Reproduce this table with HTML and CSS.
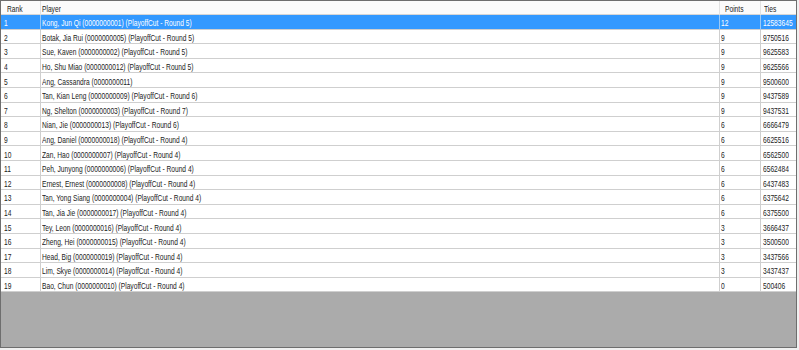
FILE: index.html
```html
<!DOCTYPE html>
<html>
<head>
<meta charset="utf-8">
<link rel="stylesheet" href="styles.css">
</head>
<body>
<div class="window">
  <div class="grid">
    <div class="row head">
      <div class="cell c-rank"><span class="t">Rank</span></div>
      <div class="cell c-player"><span class="t">Player</span></div>
      <div class="cell c-points"><span class="t">Points</span></div>
      <div class="cell c-ties"><span class="t">Ties</span></div>
    </div>
    <div class="row sel">
      <div class="cell c-rank"><span class="t">1</span></div>
      <div class="cell c-player"><span class="t">Kong, Jun Qi (0000000001) (PlayoffCut - Round 5)</span></div>
      <div class="cell c-points"><span class="t">12</span></div>
      <div class="cell c-ties"><span class="t">12583645</span></div>
    </div>
    <div class="row">
      <div class="cell c-rank"><span class="t">2</span></div>
      <div class="cell c-player"><span class="t">Botak, Jia Rui (0000000005) (PlayoffCut - Round 5)</span></div>
      <div class="cell c-points"><span class="t">9</span></div>
      <div class="cell c-ties"><span class="t">9750516</span></div>
    </div>
    <div class="row">
      <div class="cell c-rank"><span class="t">3</span></div>
      <div class="cell c-player"><span class="t">Sue, Kaven (0000000002) (PlayoffCut - Round 5)</span></div>
      <div class="cell c-points"><span class="t">9</span></div>
      <div class="cell c-ties"><span class="t">9625583</span></div>
    </div>
    <div class="row">
      <div class="cell c-rank"><span class="t">4</span></div>
      <div class="cell c-player"><span class="t">Ho, Shu Miao (0000000012) (PlayoffCut - Round 5)</span></div>
      <div class="cell c-points"><span class="t">9</span></div>
      <div class="cell c-ties"><span class="t">9625566</span></div>
    </div>
    <div class="row">
      <div class="cell c-rank"><span class="t">5</span></div>
      <div class="cell c-player"><span class="t">Ang, Cassandra (0000000011)</span></div>
      <div class="cell c-points"><span class="t">9</span></div>
      <div class="cell c-ties"><span class="t">9500600</span></div>
    </div>
    <div class="row">
      <div class="cell c-rank"><span class="t">6</span></div>
      <div class="cell c-player"><span class="t">Tan, Kian Leng (0000000009) (PlayoffCut - Round 6)</span></div>
      <div class="cell c-points"><span class="t">9</span></div>
      <div class="cell c-ties"><span class="t">9437589</span></div>
    </div>
    <div class="row">
      <div class="cell c-rank"><span class="t">7</span></div>
      <div class="cell c-player"><span class="t">Ng, Shelton (0000000003) (PlayoffCut - Round 7)</span></div>
      <div class="cell c-points"><span class="t">9</span></div>
      <div class="cell c-ties"><span class="t">9437531</span></div>
    </div>
    <div class="row">
      <div class="cell c-rank"><span class="t">8</span></div>
      <div class="cell c-player"><span class="t">Nian, Jie (0000000013) (PlayoffCut - Round 6)</span></div>
      <div class="cell c-points"><span class="t">6</span></div>
      <div class="cell c-ties"><span class="t">6666479</span></div>
    </div>
    <div class="row">
      <div class="cell c-rank"><span class="t">9</span></div>
      <div class="cell c-player"><span class="t">Ang, Daniel (0000000018) (PlayoffCut - Round 4)</span></div>
      <div class="cell c-points"><span class="t">6</span></div>
      <div class="cell c-ties"><span class="t">6625516</span></div>
    </div>
    <div class="row">
      <div class="cell c-rank"><span class="t">10</span></div>
      <div class="cell c-player"><span class="t">Zan, Hao (0000000007) (PlayoffCut - Round 4)</span></div>
      <div class="cell c-points"><span class="t">6</span></div>
      <div class="cell c-ties"><span class="t">6562500</span></div>
    </div>
    <div class="row">
      <div class="cell c-rank"><span class="t">11</span></div>
      <div class="cell c-player"><span class="t">Peh, Junyong (0000000006) (PlayoffCut - Round 4)</span></div>
      <div class="cell c-points"><span class="t">6</span></div>
      <div class="cell c-ties"><span class="t">6562484</span></div>
    </div>
    <div class="row">
      <div class="cell c-rank"><span class="t">12</span></div>
      <div class="cell c-player"><span class="t">Ernest, Ernest (0000000008) (PlayoffCut - Round 4)</span></div>
      <div class="cell c-points"><span class="t">6</span></div>
      <div class="cell c-ties"><span class="t">6437483</span></div>
    </div>
    <div class="row">
      <div class="cell c-rank"><span class="t">13</span></div>
      <div class="cell c-player"><span class="t">Tan, Yong Siang (0000000004) (PlayoffCut - Round 4)</span></div>
      <div class="cell c-points"><span class="t">6</span></div>
      <div class="cell c-ties"><span class="t">6375642</span></div>
    </div>
    <div class="row">
      <div class="cell c-rank"><span class="t">14</span></div>
      <div class="cell c-player"><span class="t">Tan, Jia Jie (0000000017) (PlayoffCut - Round 4)</span></div>
      <div class="cell c-points"><span class="t">6</span></div>
      <div class="cell c-ties"><span class="t">6375500</span></div>
    </div>
    <div class="row">
      <div class="cell c-rank"><span class="t">15</span></div>
      <div class="cell c-player"><span class="t">Tey, Leon (0000000016) (PlayoffCut - Round 4)</span></div>
      <div class="cell c-points"><span class="t">3</span></div>
      <div class="cell c-ties"><span class="t">3666437</span></div>
    </div>
    <div class="row">
      <div class="cell c-rank"><span class="t">16</span></div>
      <div class="cell c-player"><span class="t">Zheng, Hei (0000000015) (PlayoffCut - Round 4)</span></div>
      <div class="cell c-points"><span class="t">3</span></div>
      <div class="cell c-ties"><span class="t">3500500</span></div>
    </div>
    <div class="row">
      <div class="cell c-rank"><span class="t">17</span></div>
      <div class="cell c-player"><span class="t">Head, Big (0000000019) (PlayoffCut - Round 4)</span></div>
      <div class="cell c-points"><span class="t">3</span></div>
      <div class="cell c-ties"><span class="t">3437566</span></div>
    </div>
    <div class="row">
      <div class="cell c-rank"><span class="t">18</span></div>
      <div class="cell c-player"><span class="t">Lim, Skye (0000000014) (PlayoffCut - Round 4)</span></div>
      <div class="cell c-points"><span class="t">3</span></div>
      <div class="cell c-ties"><span class="t">3437437</span></div>
    </div>
    <div class="row">
      <div class="cell c-rank"><span class="t">19</span></div>
      <div class="cell c-player"><span class="t">Bao, Chun (0000000010) (PlayoffCut - Round 4)</span></div>
      <div class="cell c-points"><span class="t">0</span></div>
      <div class="cell c-ties"><span class="t">500406</span></div>
    </div>
  </div>
</div>
</body>
</html>
```
FILE: styles.css
```css
html, body {
  margin: 0;
  padding: 0;
  background: #f0f0f0;
}
.window {
  width: 799px;
  height: 350px;
  box-sizing: border-box;
  padding: 0 2px 2px 0;
  background: #f0f0f0;
}
.grid {
  width: 797px;
  height: 348px;
  box-sizing: border-box;
  border: 1px solid #6e6e6e;
  background: #ababab;
  font-family: "Liberation Sans", Arial, sans-serif;
  font-size: 9.5px;
  color: #222;
  overflow: hidden;
}
.row {
  display: grid;
  grid-template-columns: 40px 679px 41px 35px;
  height: 14.6px;
  background: #fff;
  box-shadow: inset 0 -1px 0 #cfcfcf;
}
.head {
  height: 14px;
  background: #fbfbfb;
  box-shadow: inset 0 -1px 0 #d6d6d6;
}
.cell {
  display: flex;
  align-items: center;
  box-sizing: border-box;
  border-right: 1px solid #cfcfcf;
  padding-left: 2px;
  padding-top: 1px;
  overflow: hidden;
  white-space: nowrap;
}
.c-ties {
  border-right: 0;
}
.t {
  display: inline-block;
  transform: scaleX(0.7);
  transform-origin: left center;
}
.head .cell {
  border-right-color: #e2e2e2;
}
.head .c-rank { padding-left: 6px; }
.head .c-player { padding-left: 1px; }
.head .c-points { padding-left: 5px; }
.head .c-ties { padding-left: 3px; }
.c-rank { padding-left: 3px; }
.c-player { padding-left: 1px; }
.c-points { padding-left: 1px; }
.c-ties { padding-left: 2px; }
.sel {
  background: #3399ff;
  color: #fff;
}
.sel .cell {
  border-right-color: #9cc9f5;
}
```
